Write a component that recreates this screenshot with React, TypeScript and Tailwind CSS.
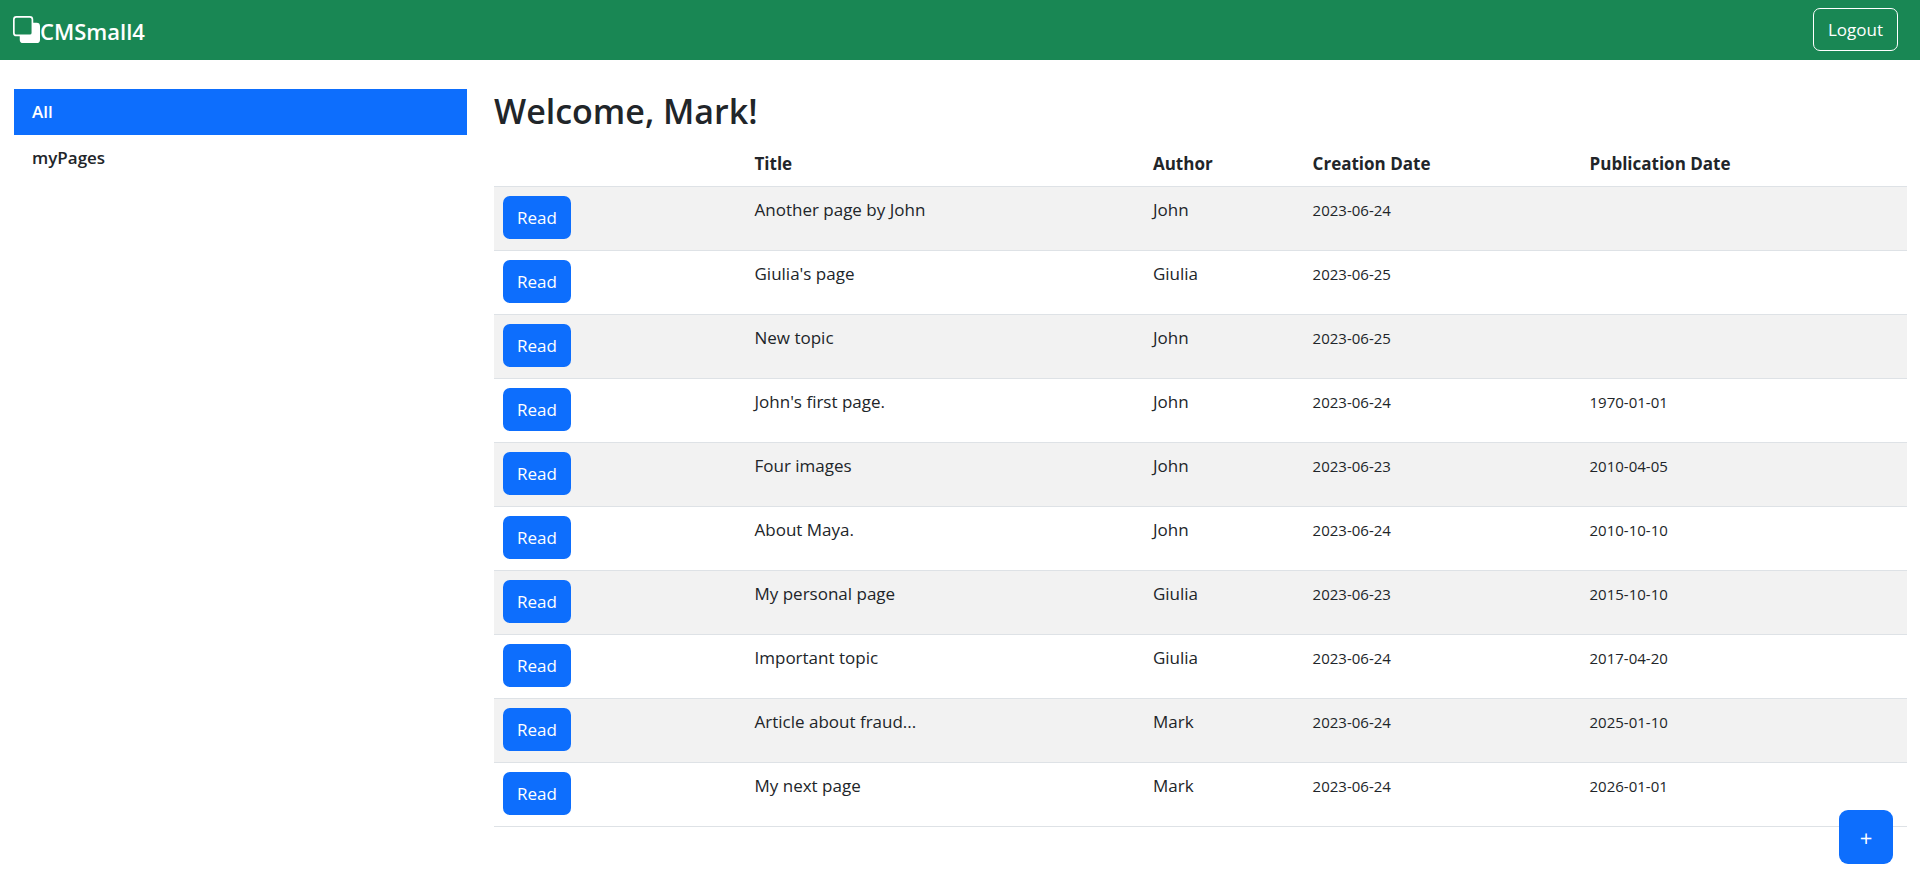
import { BsBack } from "react-icons/bs";

type Page = {
  title: string;
  author: string;
  created: string;
  published?: string;
};

const pages: Page[] = [
  { title: "Another page by John", author: "John", created: "2023-06-24" },
  { title: "Giulia's page", author: "Giulia", created: "2023-06-25" },
  { title: "New topic", author: "John", created: "2023-06-25" },
  { title: "John's first page.", author: "John", created: "2023-06-24", published: "1970-01-01" },
  { title: "Four images", author: "John", created: "2023-06-23", published: "2010-04-05" },
  { title: "About Maya.", author: "John", created: "2023-06-24", published: "2010-10-10" },
  { title: "My personal page", author: "Giulia", created: "2023-06-23", published: "2015-10-10" },
  { title: "Important topic", author: "Giulia", created: "2023-06-24", published: "2017-04-20" },
  { title: "Article about fraud...", author: "Mark", created: "2023-06-24", published: "2025-01-10" },
  { title: "My next page", author: "Mark", created: "2023-06-24", published: "2026-01-01" },
];

function Navbar() {
  return (
    <header className="flex h-15 items-center justify-between bg-[#198754] pr-[22px] pb-0.5 pl-[13px] text-white">
      <a href="#home" className="flex items-center text-[22px] leading-8 font-semibold">
        <BsBack className="size-[27px]" aria-hidden="true" />
        <span className="pt-1">CMSmall4</span>
      </a>
      <button type="button" className="h-[43px] rounded-[7px] border border-white px-[14px]">
        Logout
      </button>
    </header>
  );
}

function Sidebar() {
  return (
    <nav className="flex w-1/4 flex-col pr-[13px] pl-[14px] font-semibold">
      <a href="#all" className="bg-[#0d6efd] px-[18px] py-[9px] leading-7 text-white">
        All
      </a>
      <a href="#my-pages" className="px-[18px] py-[9px] leading-7">
        myPages
      </a>
    </nav>
  );
}

function PageTable() {
  return (
    <table className="w-full table-fixed border-collapse text-left">
      <colgroup>
        <col className="w-[17.8%]" />
        <col className="w-[28.2%]" />
        <col className="w-[11.3%]" />
        <col className="w-[19.6%]" />
        <col />
      </colgroup>
      <thead>
        <tr className="h-[45px] border-b border-[#dee2e6]">
          <th className="px-[9px]" aria-label="Actions"></th>
          <th className="px-[9px] font-bold">Title</th>
          <th className="px-[9px] font-bold">Author</th>
          <th className="px-[9px] font-bold">Creation Date</th>
          <th className="px-[9px] font-bold">Publication Date</th>
        </tr>
      </thead>
      <tbody>
        {pages.map((page) => (
          <tr key={page.title} className="h-16 border-b border-[#dee2e6] align-top odd:bg-[#f2f2f2]">
            <td className="px-[9px] pt-[9px]">
              <button type="button" className="h-[43px] rounded-[7px] bg-[#0d6efd] px-[14px] text-white">
                Read
              </button>
            </td>
            <td className="px-[9px] pt-[9px]">{page.title}</td>
            <td className="px-[9px] pt-[9px]">{page.author}</td>
            <td className="px-[9px] pt-[9px] text-[15px] leading-7">{page.created}</td>
            <td className="px-[9px] pt-[9px] text-[15px] leading-7">{page.published}</td>
          </tr>
        ))}
      </tbody>
    </table>
  );
}

export default function App() {
  return (
    <div className="min-h-screen bg-white font-['Open_Sans','Noto_Sans',sans-serif] text-[17px] leading-[27px] text-[#212529]">
      <Navbar />
      <div className="flex pt-[29px]">
        <Sidebar />
        <main className="w-3/4 pr-[13px] pl-[14px]">
          <h1 className="mb-2 text-[34px] leading-[44px] font-semibold">Welcome, Mark!</h1>
          <PageTable />
        </main>
      </div>
      <button
        type="button"
        aria-label="Add page"
        className="fixed right-[27px] bottom-6 size-[54px] rounded-[9px] bg-[#0d6efd] text-[22px] text-white"
      >
        +
      </button>
    </div>
  );
}
